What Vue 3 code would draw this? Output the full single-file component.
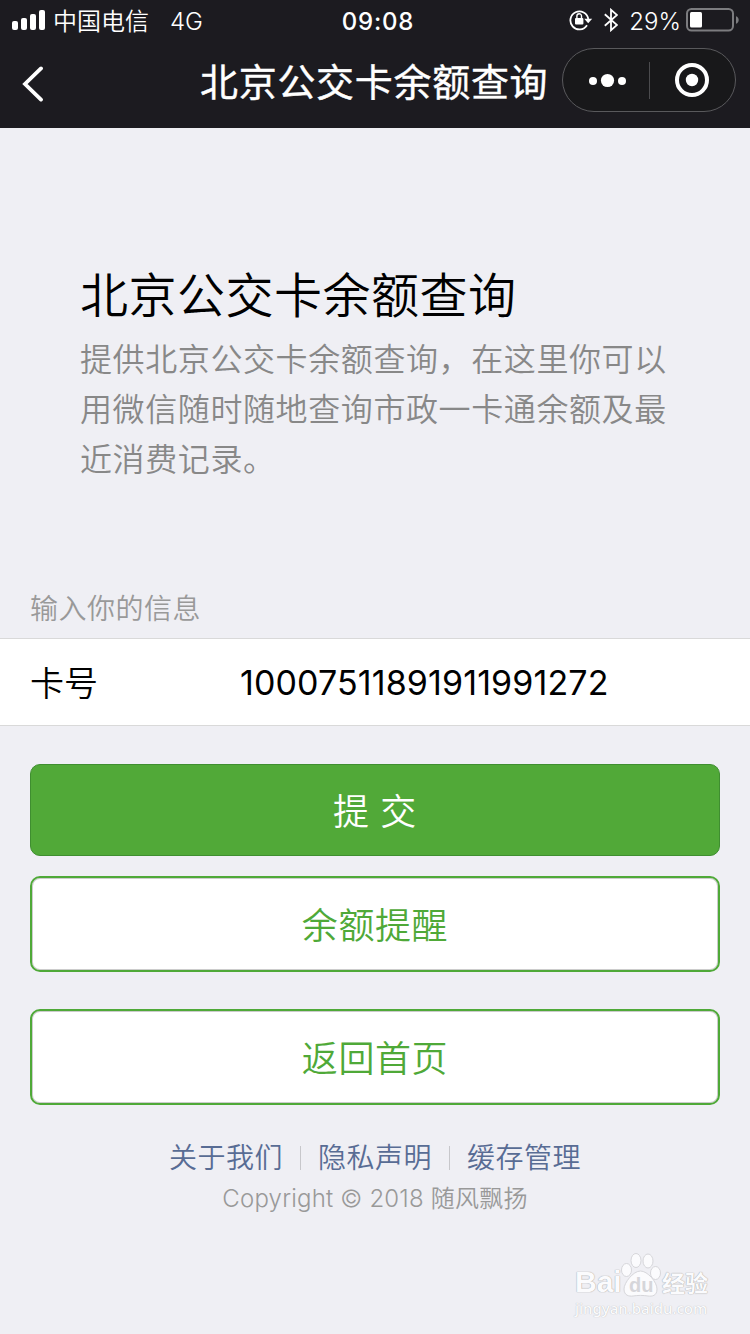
<template>
  <div class="page">
    <header class="header">
      <div class="status-bar">
        <div class="status-left">
          <svg class="signal" width="34" height="20" viewBox="0 0 34 20" fill="#fff">
            <rect x="0" y="11" width="6" height="9" rx="2" />
            <rect x="9" y="8" width="6" height="12" rx="2" />
            <rect x="18" y="4" width="6" height="16" rx="2" />
            <rect x="27" y="0" width="6" height="20" rx="2" />
          </svg>
          <span class="carrier">中国电信</span>
          <span class="network">4G</span>
        </div>
        <div class="clock">09:08</div>
        <div class="status-right">
          <svg class="lock" width="24" height="22" viewBox="0 0 24 22" fill="none">
            <path d="M18 16.2A9 9 0 1 1 19.3 10" stroke="#fff" stroke-width="1.8" />
            <path d="M15.2 9.8H23.2L19.2 14.2Z" fill="#fff" />
            <rect x="6" y="9" width="8.4" height="6.6" rx="1" fill="#fff" />
            <path d="M7.900 9.400V7a2.300 2.300 0 0 1 4.600 0V9.400" stroke="#fff" stroke-width="1.4" />
          </svg>
          <svg class="bluetooth" width="14" height="24" viewBox="0 0 14 24" fill="none">
            <path d="M.8 6.3 13 17 7 22.2V1.8L13 7 .8 17.7" stroke="#fff" stroke-width="1.8" />
          </svg>
          <span class="percent">29%</span>
          <svg class="battery" width="54" height="24" viewBox="0 0 54 24" fill="none">
            <rect x="1" y="1" width="46" height="21.5" rx="4.5" stroke="#7c7c7f" stroke-width="2" />
            <rect x="4" y="4" width="12" height="15.5" rx="1.5" fill="#fff" />
            <path d="M50 8.2c3.6 1.2 3.6 6.4 0 7.6z" fill="#7c7c7f" />
          </svg>
        </div>
      </div>
      <div class="nav-bar">
        <svg class="back" width="24" height="36" viewBox="0 0 24 36" fill="none">
          <path d="M20 2.4 4 18l16 15.6" stroke="#fff" stroke-width="3.8" stroke-linecap="round" />
        </svg>
        <h1 class="nav-title">{{ title }}</h1>
        <div class="capsule">
          <svg class="capsule-icon" width="86" height="62" viewBox="0 0 86 62" fill="#fff">
            <circle cx="30" cy="32" r="4" />
            <circle cx="44.5" cy="31.5" r="6.6" />
            <circle cx="59" cy="32" r="4" />
          </svg>
          <span class="capsule-line"></span>
          <svg class="capsule-icon" width="85" height="62" viewBox="0 0 85 62">
            <circle cx="42" cy="31" r="15" fill="none" stroke="#fff" stroke-width="4" />
            <circle cx="42" cy="31" r="6.2" fill="#fff" />
          </svg>
        </div>
      </div>
    </header>

    <main class="content">
      <section class="intro">
        <h2 class="intro-title">{{ title }}</h2>
        <p class="intro-desc">提供北京公交卡余额查询，在这里你可以用微信随时随地查询市政一卡通余额及最近消费记录。</p>
      </section>

      <div class="cells-title">输入你的信息</div>
      <div class="cell">
        <label class="cell-label">卡号</label>
        <div class="cell-value">{{ cardNo }}</div>
      </div>

      <div class="buttons">
        <button class="btn btn-primary">提 交</button>
        <button class="btn btn-plain">余额提醒</button>
        <button class="btn btn-plain btn-home">返回首页</button>
      </div>
    </main>

    <footer class="footer">
      <nav class="footer-links">
        <a v-for="link in links" :key="link" class="footer-link">{{ link }}</a>
      </nav>
      <p class="copyright">Copyright © 2018 随风飘扬</p>
    </footer>

    <div class="brand">
      <div class="brand-row">
        <span class="brand-bai">Bai</span>
        <span class="brand-paw">
          <svg width="42" height="46" viewBox="0 0 42 46" fill="#fbfbfd" stroke="#d6d6da">
            <ellipse cx="6.5" cy="18" rx="5" ry="6.5" />
            <ellipse cx="16" cy="8.5" rx="5" ry="7" />
            <ellipse cx="28" cy="9" rx="5" ry="7" />
            <ellipse cx="35.5" cy="21" rx="5" ry="6.5" />
            <path d="M20.5 19c7 0 16.5 11 16.5 18 0 7-5 7.5-9 7-5-.8-10-.8-15 0-4 .5-9-.5-9-7 0-6 9-18 16.5-18z" />
          </svg>
          <span class="brand-du">du</span>
        </span>
        <span class="brand-cn">经验</span>
      </div>
      <div class="brand-url">jingyan.baidu.com</div>
    </div>
  </div>
</template>

<script setup>
import { ref } from 'vue'

const title = '北京公交卡余额查询'
const cardNo = ref('10007511891911991272')
const links = ['关于我们', '隐私声明', '缓存管理']
</script>

<style>
body {
  margin: 0;
  background: #efeff4;
}
</style>

<style scoped>
.page {
  position: relative;
  box-sizing: border-box;
  height: 1334px;
  overflow: hidden;
  background: #efeff4;
  font-family: Inter, "Noto Sans CJK SC", sans-serif;
  font-weight: 350;
}

h1,
h2,
p {
  margin: 0;
}

svg {
  display: block;
  flex: none;
}

.header {
  height: 128px;
  background: #1c1b20;
  color: #fff;
}

.status-bar {
  display: grid;
  grid-template-columns: 1fr auto 1fr;
  align-items: center;
  height: 40px;
  padding: 0 10px 0 12px;
  font-size: 24px;
  line-height: 40px;
}

.status-left,
.status-right {
  display: flex;
  align-items: center;
}

.status-right {
  justify-content: flex-end;
}

.signal,
.lock,
.bluetooth,
.battery {
  margin-top: -2px;
}

.carrier {
  margin-left: 7px;
  padding-top: 2px;
}

.network {
  margin-left: 21px;
  padding-top: 2px;
}

.clock {
  padding: 2px 0 0 4px;
  font-weight: 500;
  letter-spacing: 0.8px;
}

.bluetooth {
  margin-left: 11px;
}

.percent {
  margin-left: 11px;
  padding-top: 2px;
}

.battery {
  margin-left: 5px;
}

.nav-bar {
  display: flex;
  align-items: center;
  height: 88px;
  padding: 0 14px 0 21px;
}

.back {
  margin-top: -1px;
}

.nav-title {
  flex: 1;
  margin: -4px 0 0 155px;
  font-size: 38px;
  font-weight: 400;
  letter-spacing: 0.7px;
  line-height: 88px;
  white-space: nowrap;
  -webkit-text-stroke: 0.4px #fff;
}

.capsule {
  display: flex;
  align-items: center;
  box-sizing: border-box;
  width: 174px;
  height: 64px;
  margin-top: -8px;
  border: 1px solid #59595c;
  border-radius: 32px;
  background: #18181a;
}

.capsule-line {
  width: 1px;
  height: 37px;
  background: #4b4b4e;
}

.intro {
  padding: 132px 80px 0;
}

.intro-title {
  font-size: 48px;
  font-weight: 350;
  letter-spacing: 0.5px;
  line-height: 72px;
  color: #000;
}

.intro-desc {
  margin-top: 3px;
  font-size: 32px;
  letter-spacing: 0.6px;
  line-height: 50px;
  color: #888;
}

.cells-title {
  margin-top: 104px;
  padding-left: 30px;
  font-size: 28px;
  letter-spacing: 0.5px;
  line-height: 40px;
  color: #999;
}

.cell {
  display: flex;
  align-items: center;
  box-sizing: border-box;
  height: 88px;
  margin-top: 9px;
  padding: 0 30px;
  border: solid #d9d9d9;
  border-width: 1px 0;
  background: #fff;
  font-size: 34px;
  color: #000;
}

.cell-label {
  width: 210px;
  margin-top: -2px;
}

.cell-value {
  font-weight: 400;
  letter-spacing: 0.12px;
}

.buttons {
  display: flex;
  flex-direction: column;
  gap: 20px;
  padding: 38px 30px 0;
}

.btn {
  box-sizing: border-box;
  height: 96px;
  padding: 0 0 3px;
  border: 2px solid #4fa938;
  border-radius: 10px;
  background: #fff;
  box-shadow: inset 0 0 0 1px #ccc;
  font-family: inherit;
  font-size: 36px;
  font-weight: inherit;
  letter-spacing: 0.6px;
  color: #4fa938;
}

.btn-primary {
  height: 92px;
  border: 1px solid #3f8e30;
  background: #51a938;
  box-shadow: none;
  color: #fff;
}

.btn-home {
  margin-top: 17px;
}

.footer {
  padding-top: 33px;
  text-align: center;
}

.footer-links {
  display: flex;
  justify-content: center;
  font-size: 28px;
  letter-spacing: 0.5px;
  line-height: 40px;
  color: #586c94;
}

.footer-link {
  display: flex;
  align-items: center;
}

.footer-link + .footer-link::before {
  width: 1px;
  height: 24px;
  margin: 0 17px;
  background: #c7c7cb;
  content: "";
}

.copyright {
  margin-top: 3px;
  font-size: 24px;
  letter-spacing: 0.2px;
  line-height: 36px;
  color: #999;
}

/* 右下角水印浮在页面之上 */
.brand {
  position: absolute;
  left: 575px;
  top: 1252px;
  font-family: "Liberation Sans", "Noto Sans CJK SC", sans-serif;
  color: #fbfbfd;
  text-shadow: 0 0 1px #aaa, 0 0 1px #aaa;
}

.brand-row {
  display: flex;
  align-items: flex-end;
  height: 46px;
}

.brand-bai {
  width: 45px;
  margin-bottom: 1px;
  font-size: 30px;
  font-weight: 700;
  line-height: 30px;
}

.brand-paw {
  position: relative;
}

.brand-du {
  position: absolute;
  left: 9px;
  top: 21px;
  font-size: 20px;
  font-weight: 700;
  line-height: 24px;
  color: #d6d6da;
  text-shadow: none;
}

.brand-cn {
  font-size: 23px;
  font-weight: 700;
  line-height: 28px;
}

.brand-url {
  margin-top: 2px;
  font-family: "Noto Sans", sans-serif;
  font-size: 15px;
  font-weight: 500;
  line-height: 17px;
  text-shadow: 0 0 1px #aaa;
}
</style>
